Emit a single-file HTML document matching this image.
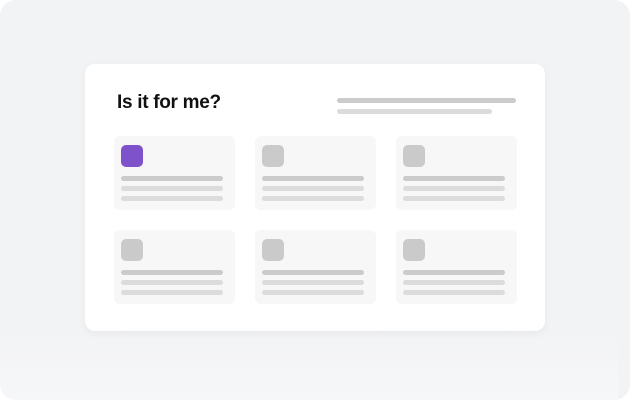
<!DOCTYPE html>
<html><head><style>
html,body{margin:0;padding:0;background:#fff;}
.outer{position:absolute;left:0;top:0;width:630px;height:400px;background:#f2f3f5;border-radius:16px;overflow:hidden;}
.fade{position:absolute;left:0;top:330px;width:618px;height:70px;background:linear-gradient(#f2f3f5,#f6f7f9);}
.card{position:absolute;left:85px;top:64px;width:460px;height:267px;background:#fff;border-radius:10px;box-shadow:0 2px 8px rgba(0,0,0,0.05);}
h1{position:absolute;left:32px;top:28px;margin:0;font:700 19px "Liberation Sans",sans-serif;color:#111;letter-spacing:-0.3px;}
.hl{position:absolute;height:5px;border-radius:3px;}
.tile{position:absolute;width:121px;height:74px;background:#f7f7f7;border-radius:6px;}
.ic{position:absolute;left:7px;top:9px;width:22px;height:22px;border-radius:5px;background:#cacaca;}
.l{position:absolute;left:7px;width:102px;height:5px;border-radius:3px;background:#dcdcdc;}
</style></head><body>
<div class="outer"><div class="fade"></div>
<div class="card">
<h1>Is it for me?</h1>
<div class="hl" style="left:252px;top:34px;width:179px;background:#cbcbcb"></div>
<div class="hl" style="left:252px;top:45px;width:155px;background:#dcdcdc"></div>

<div class="tile" style="left:29px;top:72px"><div class="ic" style="background:#7e52cb"></div><div class="l" style="top:40px;background:#cbcbcb"></div><div class="l" style="top:50px"></div><div class="l" style="top:60px"></div></div>
<div class="tile" style="left:170px;top:72px"><div class="ic"></div><div class="l" style="top:40px;background:#cbcbcb"></div><div class="l" style="top:50px"></div><div class="l" style="top:60px"></div></div>
<div class="tile" style="left:311px;top:72px"><div class="ic"></div><div class="l" style="top:40px;background:#cbcbcb"></div><div class="l" style="top:50px"></div><div class="l" style="top:60px"></div></div>
<div class="tile" style="left:29px;top:166px"><div class="ic"></div><div class="l" style="top:40px;background:#cbcbcb"></div><div class="l" style="top:50px"></div><div class="l" style="top:60px"></div></div>
<div class="tile" style="left:170px;top:166px"><div class="ic"></div><div class="l" style="top:40px;background:#cbcbcb"></div><div class="l" style="top:50px"></div><div class="l" style="top:60px"></div></div>
<div class="tile" style="left:311px;top:166px"><div class="ic"></div><div class="l" style="top:40px;background:#cbcbcb"></div><div class="l" style="top:50px"></div><div class="l" style="top:60px"></div></div>
</div></div>
</body></html>
